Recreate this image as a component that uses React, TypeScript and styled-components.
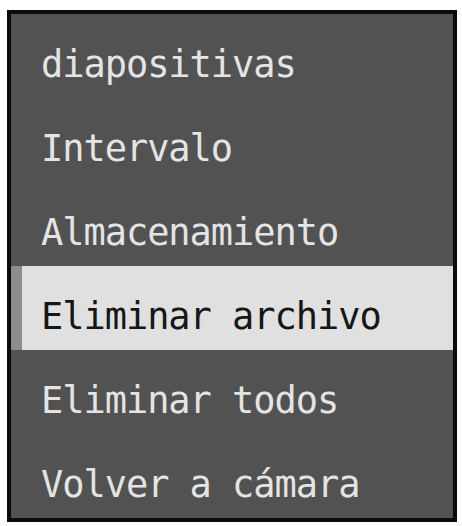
import React from 'react';
import styled, { createGlobalStyle } from 'styled-components';

const GlobalStyle = createGlobalStyle`
    html, body {
        margin: 0;
        padding: 0;
        background: #ffffff;
    }
`;

const Page = styled.div`
    padding: 10px 5px 0 7px;
`;

const Menu = styled.ul`
    box-sizing: border-box;
    width: 450px;
    margin: 0;
    padding: 0;
    list-style: none;
    background: #525252;
    border: 4px solid #0c0c0c;
`;

const Item = styled.li<{ selected?: boolean }>`
    box-sizing: border-box;
    height: 84px;
    padding: 32px 0 0 ${({ selected }) => (selected ? 19 : 30)}px;
    border-left: ${({ selected }) => (selected ? '11px solid #8c8c8c' : 'none')};
    background: ${({ selected }) => (selected ? '#e0e0e0' : 'transparent')};
    color: ${({ selected }) => (selected ? '#161616' : '#e4e4e4')};
    font-family: 'DejaVu Sans Mono', 'Liberation Mono', monospace;
    font-size: 37px;
    line-height: 37px;
    letter-spacing: -1.05px;
    white-space: nowrap;
`;

const items = [
    'diapositivas',
    'Intervalo',
    'Almacenamiento',
    'Eliminar archivo',
    'Eliminar todos',
    'Volver a cámara',
];

const App = () => {
    const selectedIndex = 3;

    return (
        <Page>
            <GlobalStyle />
            <Menu>
                {items.map((label, i) => (
                    <Item key={label} selected={i === selectedIndex}>
                        {label}
                    </Item>
                ))}
            </Menu>
        </Page>
    );
};

export default App;
